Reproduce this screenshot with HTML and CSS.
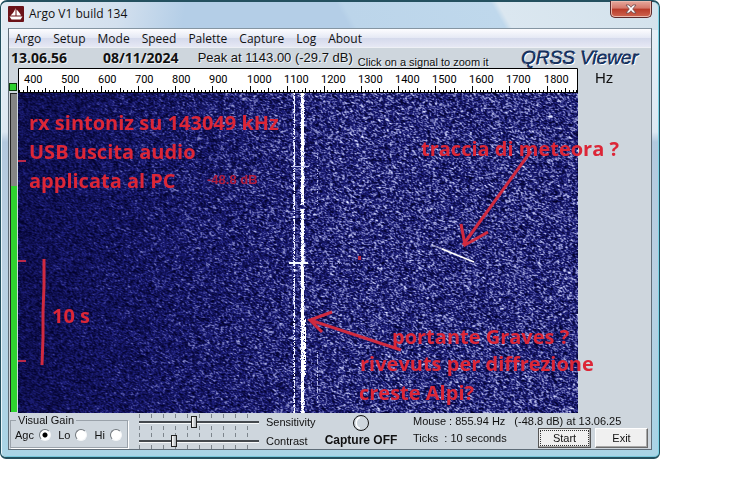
FILE: index.html
```html
<!DOCTYPE html>
<html lang="it">
<head>
<meta charset="utf-8">
<title>Argo V1 build 134</title>
<link rel="stylesheet" href="styles.css">
</head>
<body>
<main class="window">
  <header class="titlebar">
    <svg class="app-icon" viewBox="0 0 16 16" aria-hidden="true">
      <rect width="16" height="16" rx="1" fill="#6b1218"/>
      <path d="M7.500 2v7.500H2.500C4.800 7.500 6.500 5 7.500 2z" fill="#fff"/>
      <path d="M8.500 3.500c1.800 1.500 3.500 3.500 4.500 6H8.500z" fill="#fff"/>
      <path d="M1.500 10.500h13l-2 3h-9z" fill="#fff"/>
    </svg>
    <h1 class="title">Argo V1 build 134</h1>
    <button class="close" type="button" aria-label="Close">
      <svg viewBox="0 0 12 10" width="12" height="10" aria-hidden="true">
        <path d="M1 1h3l2 2.300L8 1h3L7.700 5 11 9H8L6 6.700 4 9H1l3.300-4z" fill="#fff" stroke="#6c4a4c" stroke-width=".8"/>
      </svg>
    </button>
  </header>
  <div class="client">
    <nav class="menubar">
      <button type="button">Argo</button>
      <button type="button">Setup</button>
      <button type="button">Mode</button>
      <button type="button">Speed</button>
      <button type="button">Palette</button>
      <button type="button">Capture</button>
      <button type="button">Log</button>
      <button type="button">About</button>
    </nav>
    <div class="info">
      <span class="time">13.06.56</span>
      <span class="date">08/11/2024</span>
      <span class="peak">Peak at 1143.00 (-29.7 dB)</span>
      <span class="hint">Click on a signal to zoom it</span>
      <span class="brand">QRSS Viewer</span>
    </div>
    <div class="display">
      <div class="meter">
        <span class="lamp"></span>
        <span class="level"><span class="level-fill"></span></span>
      </div>
      <div class="spectrum">
        <svg class="ruler" id="ruler" viewBox="0 0 560 25"></svg>
        <div class="waterfall">
          <canvas id="noise" width="560" height="320"></canvas>
          <svg class="notes" viewBox="0 0 560 320">
            <g class="meteor">
              <path d="M414 152l16 6" opacity=".45"/>
              <path d="M424 156l32 13"/>
            </g>
            <g class="ticks"><path d="M0 68h8M0 168h8M0 268h8"/></g>
            <rect x="340" y="163" width="3" height="4" fill="#b32643"/>
            <g class="pen">
              <path d="M26 166v27l-1 26v26l-1 27"/>
              <path d="M513 58L445 152M443 131l4 21 23-13"/>
              <path d="M383 257L292 227M314 219l-22 8 12 12"/>
            </g>
            <text x="189" y="91" class="readout">-48.8 dB</text>
            <g class="caption">
              <text x="11" y="37">rx sintoniz su 143049 kHz</text>
              <text x="11" y="66">USB uscita audio</text>
              <text x="11" y="95">applicata al PC</text>
              <text x="34" y="230">10 s</text>
              <text x="403" y="63">traccia di meteora ?</text>
              <text x="374" y="251">portante Graves ?</text>
              <text x="342" y="278">rivevuts per diffrezione</text>
              <text x="341" y="307">creste Alpi?</text>
            </g>
          </svg>
        </div>
      </div>
      <div class="side">Hz</div>
    </div>
    <footer class="controls">
      <fieldset class="gain">
        <legend>Visual Gain</legend>
        <label>Agc <input type="radio" name="gain" checked></label>
        <label>Lo <input type="radio" name="gain"></label>
        <label>Hi <input type="radio" name="gain"></label>
      </fieldset>
      <div class="sliders">
        <input type="range" id="sens" min="0" max="100" value="46">
        <label for="sens">Sensitivity</label>
        <input type="range" id="cont" min="0" max="100" value="28">
        <label for="cont">Contrast</label>
      </div>
      <div class="capture">
        <svg viewBox="0 0 18 18" width="18" height="18" aria-hidden="true">
          <circle cx="9" cy="9" r="7.500" fill="#ced6dd" stroke="#111"/>
          <path d="M8 3.500C3 5 3 13 8 14.500" fill="none" stroke="#fff" stroke-width="1.500"/>
        </svg>
        <strong>Capture OFF</strong>
      </div>
      <div class="status">
        <div class="status-line"><span>Mouse : 855.94 Hz</span><span>(-48.8 dB) at 13.06.25</span></div>
        <div class="status-line">
          <span>Ticks&nbsp; : 10 seconds</span>
          <span class="buttons">
            <button type="button" class="btn default"><span>Start</span></button>
            <button type="button" class="btn"><span>Exit</span></button>
          </span>
        </div>
      </div>
    </footer>
  </div>
</main>
<script src="app.js"></script>
</body>
</html>
```
FILE: styles.css
```css
* { box-sizing: border-box; }
body {
  margin: 0;
  padding-right: 88px;
  background: #fff;
  color: #111;
  font: 11px/14px "Liberation Sans", Arial, sans-serif;
}
button { font: inherit; color: inherit; }
.window {
  padding: 0 7px 7px;
  border: 1px solid #24505f;
  border-width: 2px 1px 2px 1px;
  border-radius: 7px 7px 6px 6px;
  background:
    linear-gradient(100deg, #e4ebf3 0, #d3e0ee 18%, transparent 28%) 0 0 / 100% 28px no-repeat,
    linear-gradient(60deg, #b4cee7 0, #b4cee7 52%, #bcd5ea 53%, #bfd8ec 75%, #dbe7f0 76%, #d3e2ec 100%) 0 0 / 100% 28px no-repeat,
    linear-gradient(#e8f1f8, #dce8f2 130px, #b3c9de 140px, #b9d0e2 60%, #a9d4e6);
  background-color: #b2cce4;
  box-shadow: inset 1px 0 #e9f5fa, inset -1px 0 #7fd4e6, inset 0 -1px #78c8dc;
}
.titlebar {
  display: flex;
  align-items: flex-start;
  height: 26px;
}
.app-icon { width: 16px; height: 16px; margin: 4px 5px 0 0; }
.title {
  flex: 1;
  margin: 3px 0 0;
  font: 12px/18px "Open Sans", sans-serif;
}
.close {
  display: flex;
  align-items: center;
  justify-content: center;
  width: 42px;
  height: 17px;
  margin-top: -1px;
  padding: 0;
  border: 1px solid #5c2a2c;
  border-top: 0;
  border-radius: 0 0 5px 5px;
  background: linear-gradient(#e6a99d, #d4786a 45%, #b83a28 50%, #cf6550);
  box-shadow: inset 0 0 0 1px #eab8ac;
}
.client {
  border: 1px solid #5f6d78;
  border-top-color: #8595a2;
  background: #ced6dd;
}
.menubar {
  display: flex;
  gap: 12px;
  padding: 0 6px;
  height: 19px;
  border-bottom: 1px solid #eef0f5;
  background: linear-gradient(#fdfdff, #e4e8f4 50%, #d5daec 52%, #e6e8f4);
  font: 12px/19px "Open Sans", sans-serif;
}
.menubar button { padding: 0; border: 0; background: none; }
.info {
  display: flex;
  align-items: center;
  height: 20px;
  padding: 0 13px 0 2px;
  white-space: nowrap;
  text-shadow: 1px 1px #eef2f5;
}
.time, .date { font: bold 14px/20px "Open Sans", sans-serif; }
.date { margin-left: 36px; }
.peak { margin-left: 19px; font-size: 13px; }
.hint { align-self: flex-end; margin-left: 5px; line-height: 12px; }
.brand {
  margin-left: auto;
  color: #14305e;
  font-size: 19px;
  font-style: italic;
  line-height: 20px;
  -webkit-text-stroke: 1px #14305e;
  paint-order: stroke;
  text-shadow: 1px 1px #fff;
}
.display { display: grid; grid-template-columns: 9px minmax(0, 1fr) 73px; }
.meter { display: flex; flex-direction: column; padding-top: 15px; }
.lamp { width: 8px; height: 8px; border: 1px solid #0a3c0a; background: #2dd22d; }
.level {
  display: flex;
  flex: 1;
  flex-direction: column;
  justify-content: flex-end;
  margin: 2px 1px 1px 1px;
  border: 1px solid #222;
  border-width: 1px 0 0 1px;
  background: #858585;
}
.level-fill { height: 71%; background: #2fd32f; }
.ruler {
  display: block;
  width: 100%;
  background: #fff;
  font: 11px Roboto, sans-serif;
}
.waterfall { display: grid; }
.waterfall > * { grid-area: 1 / 1; width: 100%; height: auto; display: block; }
.notes { overflow: visible; z-index: 1; }
.caption { fill: #dc2637; font: bold 20px "Open Sans", sans-serif; }
.readout { fill: #b01c3c; font: bold 13px "Liberation Sans", sans-serif; }
.pen { fill: none; stroke: #cf2a40; stroke-width: 3; }
.ticks { stroke: #b8284a; stroke-width: 2; }
.meteor { fill: none; stroke: #fff; stroke-width: 1.5; }
.side { padding: 0 0 0 17px; font-size: 15px; line-height: 20px; }
.controls {
  display: flex;
  height: 36px;
  padding: 0 3px 0 1px;
  white-space: nowrap;
}
.gain {
  display: flex;
  justify-content: space-between;
  width: 118px;
  height: 34px;
  margin: 1px 11px 0 0;
  padding: 0 5px 0 4px;
  border: 1px solid #9aa2aa;
  box-shadow: 1px 1px #fff;
}
.gain legend { margin-left: 1px; padding: 0 2px; line-height: 13px; }
.gain label { display: flex; align-items: center; gap: 5px; height: 16px; }
input[type="radio"] {
  appearance: none;
  width: 12px;
  height: 12px;
  margin: 0;
  border: 1px solid;
  border-color: #70767c #f4f6f8 #f4f6f8 #70767c;
  border-radius: 50%;
  background: #fff;
}
input[type="radio"]:checked { background: radial-gradient(#000 0 2px, #fff 3px); }
.sliders {
  display: grid;
  grid-template-columns: 120px 48px;
  grid-template-rows: 17px 17px;
  row-gap: 2px;
  column-gap: 7px;
  align-items: center;
}
input[type="range"] {
  appearance: none;
  width: 120px;
  height: 16px;
  margin: 0;
  background:
    linear-gradient(#44494e, #44494e) 0 7px / 100% 2px no-repeat,
    linear-gradient(#f7f9fa, #f7f9fa) 0 9px / 100% 1px no-repeat,
    linear-gradient(#ced6dd, #ced6dd) 0 4px / 100% 8px no-repeat,
    repeating-linear-gradient(90deg, #7d858c 0 1px, transparent 1px 12px);
}
input[type="range"]::-webkit-slider-thumb {
  appearance: none;
  width: 6px;
  height: 12px;
  border: 1px solid #222;
  background: linear-gradient(90deg, #fff, #aab0b4);
}
.capture {
  display: flex;
  flex-direction: column;
  align-items: center;
  width: 72px;
  margin-left: 11px;
}
.capture svg { margin-top: 1px; }
.capture strong { font-size: 12px; line-height: 16px; }
.status { flex: 1; margin-left: 16px; }
.status-line { display: flex; gap: 9px; align-items: center; height: 15px; }
.status-line + .status-line { height: 20px; }
.buttons { display: flex; gap: 4px; margin-left: auto; }
.btn {
  width: 53px;
  height: 20px;
  padding: 1px;
  border: 1px solid;
  border-color: #fff #6a6a6a #6a6a6a #fff;
  background: #f0f0f0;
  box-shadow: inset -1px -1px #a8a8a8;
}
.btn span { display: block; line-height: 14px; border: 1px solid transparent; }
.btn.default { border-color: #555; }
.btn.default span { border: 1px dotted #333; }
```
FILE: app.js
```js
const SVG = 'http://www.w3.org/2000/svg';
const HZ = 560 / 1508;   // drawing units per hertz
const ORIGIN = 8.7;      // position of the 400 Hz tick

function drawRuler(svg) {
  let d = '';
  for (let f = 380; f <= 1880; f += 10) {
    const x = Math.round(ORIGIN + (f - 400) * HZ) + 0.5;
    const len = f % 100 === 0 ? 6 : f % 50 === 0 ? 4 : 2;
    d += `M${x} 24v-${len}`;
  }
  d += 'M.5 25V.5H559.5V25M0 24.5H560';
  const path = document.createElementNS(SVG, 'path');
  path.setAttribute('d', d);
  path.setAttribute('stroke', '#000');
  path.setAttribute('fill', 'none');
  svg.append(path);
  for (let f = 400; f <= 1800; f += 100) {
    const t = document.createElementNS(SVG, 'text');
    t.setAttribute('x', Math.round(ORIGIN + (f - 400) * HZ) - 3);
    t.setAttribute('y', 15);
    t.textContent = f;
    svg.append(t);
  }
}

let seed = 7919;
function rnd() {
  seed = (seed + 0x6d2b79f5) | 0;
  let t = Math.imul(seed ^ (seed >>> 15), 1 | seed);
  t = (t + Math.imul(t ^ (t >>> 7), 61 | t)) ^ t;
  return ((t ^ (t >>> 14)) >>> 0) / 4294967296;
}

function drawWaterfall(canvas) {
  const w = canvas.width, h = canvas.height;
  const ctx = canvas.getContext('2d');
  const raw = new Float32Array(w * h);
  for (let i = 0; i < raw.length; i++) {
    const r = rnd();
    raw[i] = 0.55 * r + 0.45 * r * r * r;
  }
  const img = ctx.createImageData(w, h);
  const at = (x, y) => raw[Math.min(h - 1, Math.max(0, y)) * w + Math.min(w - 1, Math.max(0, x))];
  for (let y = 0; y < h; y++) {
    for (let x = 0; x < w; x++) {
      const n = at(x, y) * 0.4 + at(x - 1, y) * 0.17 + at(x + 1, y) * 0.13 +
        at(x, y + 1) * 0.17 + at(x + 1, y + 1) * 0.13;
      const gain = 0.42 + 0.58 * Math.min(1, x / 330);
      let v = Math.max(0, n - 0.08) * gain * 1.05;
      const c = rnd();
      if (x === 276 && c < 0.8) v = 0.75 + c * 0.4;
      if (x === 275 && c < 0.4) v = 0.8;
      const gap = y > 111 && y < 116;
      if (!gap && x >= 283 && x <= 285) v = c < 0.9 ? 1 : 0.6;
      if (!gap && (x === 282 || x === 286) && c < 0.25) v = 0.8;
      if (y > 225 && y < 282 && x >= 283 && x <= 287 && c < 0.75) v = 1;
      if (x === 299 && ((y > 258 && y < 310 && c < 0.6) || (y > 60 && y < 115 && c < 0.3))) v = 0.7;
      if (x === 293 && y > 240 && c < 0.3) v = 0.5;
      if ((y === 169 || y === 170) && x > 270 && x < 290) v = 0.9;
      if (y === 170 && x >= 290 && x < 345 && c < 0.6) v = 0.55;
      if (y === 73 && x > 272 && x < 291) v = 0.75;
      const i = (y * w + x) * 4;
      const k = Math.max(0, v - 0.3);
      img.data[i] = Math.min(255, 2 + v * 90 + k * 270);
      img.data[i + 1] = Math.min(255, 2 + v * 96 + k * 270);
      img.data[i + 2] = Math.min(255, 44 + v * 260);
      img.data[i + 3] = 255;
    }
  }
  ctx.putImageData(img, 0, 0);
}

drawRuler(document.getElementById('ruler'));
drawWaterfall(document.getElementById('noise'));
```
